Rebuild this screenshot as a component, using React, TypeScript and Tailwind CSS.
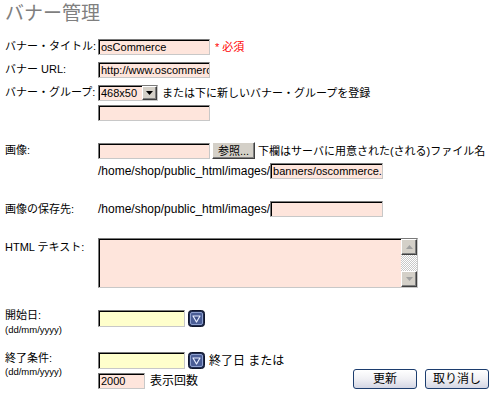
import React from "react";

const inset =
  "border border-[#7a7a7a] border-b-[#c8c8c8] border-r-[#c8c8c8] shadow-[inset_1px_1px_0_#000]";
const raised =
  "border border-white border-b-[#404040] border-r-[#404040] shadow-[inset_-1px_-1px_0_#808080] bg-[#d4d0c8]";

function Field({ value = "", w, h = "h-[16px]", bg = "bg-[#fee5dc]" }: { value?: string; w: string; h?: string; bg?: string }) {
  return (
    <div className={`${w} ${h} ${bg} ${inset} overflow-hidden whitespace-nowrap pl-[2px] leading-[14px] text-[11px]`}>
      {value}
    </div>
  );
}

function CalIcon() {
  return (
    <svg width="17" height="17" viewBox="0 0 17 17" className="shrink-0">
      <rect x="0.5" y="0.5" width="16" height="16" rx="3" fill="#1e2a4e" stroke="#10162c" />
      <rect x="2.5" y="2.5" width="12" height="12" rx="1.5" fill="#4a5d96" stroke="#8ea0cf" />
      <path d="M5 6 L12 6 L8.5 12 Z" fill="#3c4f88" stroke="#e6ecff" strokeWidth="1.2" strokeLinejoin="round" />
    </svg>
  );
}

function Label({ children }: { children: React.ReactNode }) {
  return <div className="w-[93px] shrink-0 leading-[14px] text-[11px]">{children}</div>;
}

function XpButton({ children }: { children: React.ReactNode }) {
  return (
    <button className="w-[64px] h-[20px] rounded-[3px] border border-[#1c3d6e] bg-gradient-to-b from-white via-[#f0f0f4] to-[#d4d6e4] text-[12px] leading-[18px] text-black">
      {children}
    </button>
  );
}

export default function App() {
  return (
    <div className="w-[497px] h-[397px] bg-white pl-[5px] text-black font-['Liberation_Sans','Noto_Sans_CJK_JP',sans-serif] text-[11px]">
      <h1 className="h-[28px] leading-[28px] text-[19px] text-[#7f7f7f]">バナー管理</h1>

      <div className="flex items-start mt-[11px]">
        <Label>バナー・タイトル:</Label>
        <Field value="osCommerce" w="w-[112px]" />
        <span className="ml-[5px] text-[11px] leading-[16px] text-[#ff0000]">* 必須</span>
      </div>

      <div className="flex items-start mt-[7px]">
        <Label>バナー URL:</Label>
        <Field value="http://www.oscommerce.com" w="w-[112px]" />
      </div>

      <div className="flex items-start mt-[7px]">
        <Label>バナー・グループ:</Label>
        <div>
          <div className="flex items-center">
            <div className={`w-[60px] h-[16px] bg-[#fee5dc] ${inset} flex items-center justify-between pl-[2px]`}>
              <span className="text-[11px] leading-[14px]">468x50</span>
              <div className={`w-[15px] h-[14px] ${raised} flex items-center justify-center`}>
                <svg width="7" height="4" viewBox="0 0 7 4"><path d="M0 0 H7 L3.5 4 Z" fill="#000" /></svg>
              </div>
            </div>
            <span className="ml-[4px] text-[11px] leading-[16px]">または下に新しいバナー・グループを登録</span>
          </div>
          <div className="mt-[4px]">
            <Field w="w-[112px]" />
          </div>
        </div>
      </div>

      <div className="flex items-start mt-[22px]">
        <Label>画像:</Label>
        <div>
          <div className="flex items-center">
            <Field w="w-[112px]" />
            <button className={`ml-[2px] w-[43px] h-[17px] -mt-[1px] ${raised} text-[11px] leading-[14px]`}>参照...</button>
            <span className="ml-[3px] text-[11px] leading-[16px]">下欄はサーバに用意された(される)ファイル名</span>
          </div>
          <div className="flex items-center mt-[4px]">
            <span className="text-[12px] leading-[16px]">/home/shop/public_html/images/</span>
            <Field value="banners/oscommerce.gif" w="w-[113px]" />
          </div>
        </div>
      </div>

      <div className="flex mt-[22px] items-center">
        <Label>画像の保存先:</Label>
        <span className="text-[12px] leading-[16px]">/home/shop/public_html/images/</span>
        <Field w="w-[113px]" />
      </div>

      <div className="flex items-start mt-[21px]">
        <Label>
          <div className="pt-[2px]">HTML テキスト:</div>
        </Label>
        <div className={`w-[320px] h-[50px] bg-[#fee5dc] ${inset} flex justify-end`}>
          <div className="w-[16px] h-full flex flex-col">
            <div className={`h-[16px] ${raised} flex items-center justify-center`}>
              <svg width="7" height="4" viewBox="0 0 7 4"><path d="M3.5 0 L7 4 H0 Z" fill="#a0a0a0" /></svg>
            </div>
            <div className="flex-1 bg-[repeating-conic-gradient(#c8c8c8_0_25%,#fff_0_50%)] bg-[length:2px_2px]" />
            <div className={`h-[16px] ${raised} flex items-center justify-center`}>
              <svg width="7" height="4" viewBox="0 0 7 4"><path d="M0 0 H7 L3.5 4 Z" fill="#a0a0a0" /></svg>
            </div>
          </div>
        </div>
      </div>

      <div className="flex items-start mt-[22px]">
        <Label>
          <div className="-mt-[2px]">開始日:</div>
          <div className="text-[9.5px] leading-[12px] mt-[2px]">(dd/mm/yyyy)</div>
        </Label>
        <div className="flex items-center">
          <Field w="w-[87px]" h="h-[17px]" bg="bg-[#ffffcc]" />
          <div className="ml-[3px]"><CalIcon /></div>
        </div>
      </div>

      <div className="flex items-start mt-[16px]">
        <Label>
          <div className="-mt-[1px]">終了条件:</div>
          <div className="text-[9.5px] leading-[12px] mt-[1px]">(dd/mm/yyyy)</div>
        </Label>
        <div>
          <div className="flex items-center">
            <Field w="w-[87px]" h="h-[17px]" bg="bg-[#ffffcc]" />
            <div className="ml-[3px]"><CalIcon /></div>
            <span className="ml-[4px] text-[12px] leading-[16px]">終了日 または</span>
          </div>
          <div className="flex items-center mt-[4px]">
            <Field value="2000" w="w-[47px]" />
            <span className="ml-[5px] text-[12px] leading-[16px]">表示回数</span>
          </div>
        </div>
        <div className="ml-auto mr-[8px] self-end flex gap-[8px]">
          <XpButton>更新</XpButton>
          <XpButton>取り消し</XpButton>
        </div>
      </div>
    </div>
  );
}
